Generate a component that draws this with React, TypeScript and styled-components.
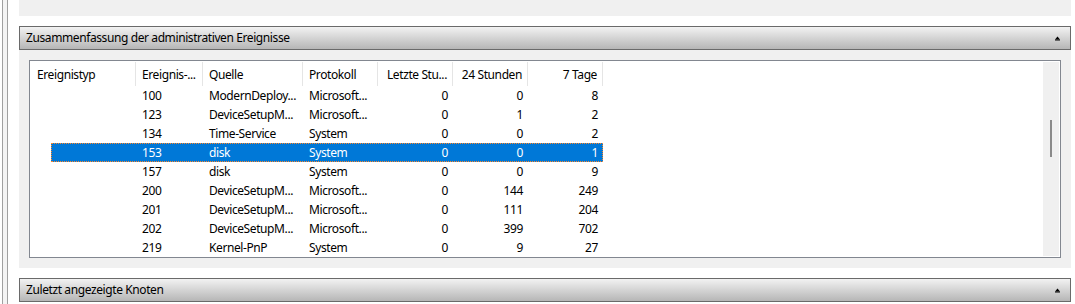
import React from "react";
import styled, { createGlobalStyle } from "styled-components";

const Global = createGlobalStyle`
  html, body { margin: 0; padding: 0; background: #ffffff; }
  body { font-family: "Noto Sans", "Open Sans", sans-serif; font-size: 12px; letter-spacing: -0.4px; color: #000; }
`;

const Page = styled.div`
  display: flex;
  width: 1075px;
  height: 304px;
  overflow: hidden;
  background: #ffffff;
`;

const Rail = styled.div`
  width: 19px;
  flex: none;
  padding-left: 2px;
  box-sizing: border-box;
`;

const RailBar = styled.div`
  width: 6px;
  height: 100%;
  box-sizing: border-box;
  border-left: 1px solid #a0a0a0;
  border-right: 1px solid #a0a0a0;
  background: #f4f4f4;
`;

const Main = styled.div`
  width: 1052px;
  flex: none;
  display: flex;
  flex-direction: column;
`;

const TopPanel = styled.div`
  height: 16px;
  background: #f0f0f0;
  margin-bottom: 10px;
`;

const SectionHeader = styled.div`
  height: 24px;
  box-sizing: border-box;
  border: 1px solid #6a6a6a;
  background: linear-gradient(#f2f2f2, #b6b6b6);
  display: flex;
  align-items: center;
  justify-content: space-between;
  padding: 0 9px 0 6px;
  flex: none;
`;

const SectionTitle = styled.span`
  line-height: 16px;
`;

const SectionBody = styled.div`
  background: #f0f0f0;
  padding: 10px;
  margin-bottom: 10px;
`;

const List = styled.div`
  height: 198px;
  box-sizing: border-box;
  border: 1px solid #828790;
  background: #ffffff;
  padding: 1px;
  display: flex;
`;

const TableArea = styled.div`
  flex: 1;
  overflow: hidden;
`;

const cols = "105px 67px 100px 75px 75px 75px 75px";

const HeaderRow = styled.div`
  display: grid;
  grid-template-columns: ${cols};
  height: 24px;
`;

const HeaderCell = styled.div<{ $right?: boolean }>`
  box-sizing: border-box;
  border-right: 1px solid #e5e5e5;
  padding: 0 5px 0 6px;
  display: flex;
  align-items: center;
  justify-content: ${(p) => (p.$right ? "flex-end" : "flex-start")};
  white-space: nowrap;
  overflow: hidden;
`;

const Row = styled.div<{ $selected?: boolean }>`
  display: grid;
  grid-template-columns: 85px 67px 100px 75px 75px 75px 75px;
  margin-left: 20px;
  width: 552px;
  height: 19px;
  box-sizing: border-box;
  background: ${(p) => (p.$selected ? "#0078d7" : "transparent")};
  color: ${(p) => (p.$selected ? "#ffffff" : "#000000")};
  outline: ${(p) => (p.$selected ? "1px dotted #ff8728" : "none")};
  outline-offset: -1px;
`;

const Cell = styled.div<{ $right?: boolean }>`
  padding: 0 5px 0 6px;
  display: flex;
  align-items: center;
  justify-content: ${(p) => (p.$right ? "flex-end" : "flex-start")};
  white-space: nowrap;
  overflow: hidden;
`;

const ScrollTrack = styled.div`
  width: 16px;
  flex: none;
  background: #f0f0f0;
  padding-top: 58px;
  padding-left: 7px;
  box-sizing: border-box;
`;

const Thumb = styled.div`
  width: 2px;
  height: 37px;
  background: #8a8a8a;
`;

const Arrow = () => (
  <svg width="7" height="5" viewBox="0 0 7 5">
    <path d="M3.5 0.5 L6 3.5 L1 3.5 Z" fill="#000" />
    <rect x="1" y="3.5" width="5" height="1" fill="#000" />
  </svg>
);

const headers: [string, boolean][] = [
  ["Ereignistyp", false],
  ["Ereignis-...", false],
  ["Quelle", false],
  ["Protokoll", false],
  ["Letzte Stu...", true],
  ["24 Stunden", true],
  ["7 Tage", true],
];

const rows = [
  ["100", "ModernDeploy...", "Microsoft...", "0", "0", "8"],
  ["123", "DeviceSetupM...", "Microsoft...", "0", "1", "2"],
  ["134", "Time-Service", "System", "0", "0", "2"],
  ["153", "disk", "System", "0", "0", "1"],
  ["157", "disk", "System", "0", "0", "9"],
  ["200", "DeviceSetupM...", "Microsoft...", "0", "144", "249"],
  ["201", "DeviceSetupM...", "Microsoft...", "0", "111", "204"],
  ["202", "DeviceSetupM...", "Microsoft...", "0", "399", "702"],
  ["219", "Kernel-PnP", "System", "0", "9", "27"],
];

export default function App() {
  return (
    <>
      <Global />
      <Page>
        <Rail>
          <RailBar />
        </Rail>
        <Main>
          <TopPanel />
          <SectionHeader>
            <SectionTitle>Zusammenfassung der administrativen Ereignisse</SectionTitle>
            <Arrow />
          </SectionHeader>
          <SectionBody>
            <List>
              <TableArea>
                <HeaderRow>
                  {headers.map(([h, r]) => (
                    <HeaderCell key={h} $right={r}>
                      {h}
                    </HeaderCell>
                  ))}
                </HeaderRow>
                {rows.map((r, i) => (
                  <Row key={r[0]} $selected={i === 3}>
                    <Cell />
                    <Cell>{r[0]}</Cell>
                    <Cell>{r[1]}</Cell>
                    <Cell>{r[2]}</Cell>
                    <Cell $right>{r[3]}</Cell>
                    <Cell $right>{r[4]}</Cell>
                    <Cell $right>{r[5]}</Cell>
                  </Row>
                ))}
              </TableArea>
              <ScrollTrack>
                <Thumb />
              </ScrollTrack>
            </List>
          </SectionBody>
          <SectionHeader>
            <SectionTitle>Zuletzt angezeigte Knoten</SectionTitle>
            <Arrow />
          </SectionHeader>
        </Main>
      </Page>
    </>
  );
}
